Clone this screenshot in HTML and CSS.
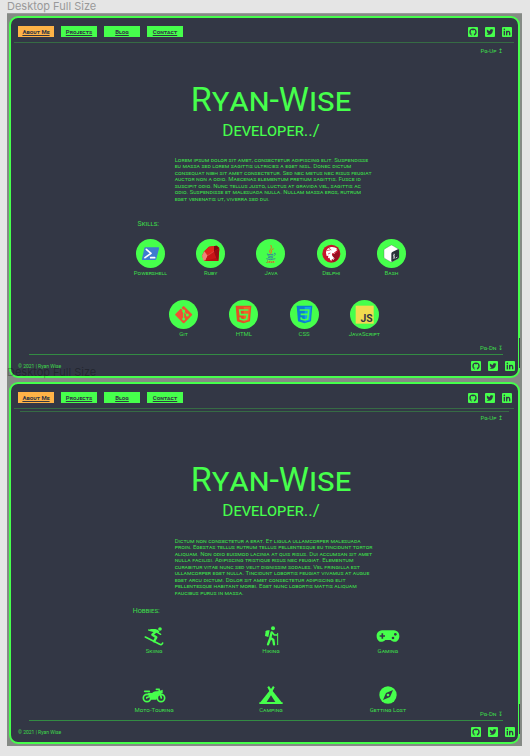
FILE: index.html
```html
<!DOCTYPE html>
<html lang="en">
<head>
<meta charset="utf-8">
<meta name="viewport" content="width=device-width, initial-scale=1">
<title>Ryan-Wise | Developer</title>
<link rel="stylesheet" href="styles.css">
</head>
<body>
<svg class="sprite" aria-hidden="true">
  <symbol id="github" viewBox="0 0 30 30"><rect width="30" height="30" rx="3" fill="#46ff4c"/><path transform="translate(1.8 2) scale(1.1)" fill="#333745" d="M12,2A10,10 0 0,0 2,12C2,16.42 4.87,20.17 8.84,21.5C9.34,21.58 9.5,21.27 9.5,21C9.5,20.77 9.5,20.14 9.5,19.31C6.73,19.91 6.14,17.97 6.14,17.97C5.68,16.81 5.03,16.5 5.03,16.5C4.12,15.88 5.1,15.9 5.1,15.9C6.1,15.97 6.63,16.93 6.63,16.93C7.5,18.45 8.97,18 9.54,17.76C9.63,17.11 9.89,16.67 10.17,16.42C7.95,16.17 5.62,15.31 5.62,11.5C5.62,10.39 6,9.5 6.65,8.79C6.55,8.54 6.2,7.5 6.75,6.15C6.75,6.15 7.59,5.88 9.5,7.17C10.29,6.95 11.15,6.84 12,6.84C12.85,6.84 13.71,6.95 14.5,7.17C16.41,5.88 17.25,6.15 17.25,6.15C17.8,7.5 17.45,8.54 17.35,8.79C18,9.5 18.38,10.39 18.38,11.5C18.38,15.32 16.04,16.16 13.81,16.41C14.17,16.72 14.5,17.33 14.5,18.26C14.5,19.6 14.5,20.68 14.5,21C14.5,21.27 14.66,21.59 15.17,21.5C19.14,20.16 22,16.42 22,12A10,10 0 0,0 12,2Z"/></symbol>
  <symbol id="twitter" viewBox="0 0 30 30"><rect width="30" height="30" rx="3" fill="#46ff4c"/><path transform="translate(3 2.5)" fill="#333745" d="M22.46,6C21.69,6.35 20.86,6.58 20,6.69C20.88,6.16 21.56,5.32 21.88,4.31C21.05,4.81 20.13,5.16 19.16,5.36C18.37,4.5 17.26,4 16,4C13.65,4 11.73,5.92 11.73,8.29C11.73,8.63 11.77,8.96 11.84,9.27C8.28,9.09 5.11,7.38 3,4.79C2.63,5.42 2.42,6.16 2.42,6.94C2.42,8.43 3.17,9.75 4.33,10.5C3.62,10.5 2.96,10.3 2.38,10C2.38,12.11 3.86,13.85 5.82,14.24C5.46,14.34 5.08,14.39 4.69,14.39C4.42,14.39 4.15,14.36 3.89,14.31C4.43,16 6,17.26 7.89,17.29C6.43,18.45 4.58,19.13 2.56,19.13C2.22,19.13 1.88,19.11 1.54,19.07C3.44,20.29 5.7,21 8.12,21C16,21 20.33,14.46 20.33,8.79C20.33,8.6 20.33,8.42 20.32,8.23C21.16,7.63 21.88,6.87 22.46,6Z"/></symbol>
  <symbol id="linkedin" viewBox="0 0 30 30"><rect width="30" height="30" rx="3" fill="#46ff4c"/><g fill="#333745"><circle cx="7" cy="7" r="2.4"/><rect x="5" y="11.5" width="4" height="13.5"/><rect x="12" y="11.5" width="4" height="13.5"/></g><path d="M14 17.5C14 12 23 11.500 23 18V25" fill="none" stroke="#333745" stroke-width="4"/></symbol>

  <symbol id="powershell" viewBox="0 0 87 87"><path d="M28 25H67Q70 25 69 29L61 59Q60 63 56 63H21Q17 63 18 59L25 28Q26 25 28 25Z" fill="#3f7bd0"/><path d="M31 31 45 43 27 56M44 56H56" fill="none" stroke="#fff" stroke-width="5" stroke-linecap="round" stroke-linejoin="round"/></symbol>
  <symbol id="ruby" viewBox="0 0 87 87"><path d="M18 50 25 37 39 23 62 20 70 27 67 66 25 66Z" fill="#b80f12"/><path d="M18 50 25 37 35 50 28 65 22 64Z" fill="#ef8478"/><path d="M25 37 39 23 54 21 54 37 35 50Z" fill="#e0251c"/><path d="M54 21 62 20 70 27 54 37Z" fill="#7f0910"/><path d="M35 50 54 37 61 57 28 65Z" fill="#c81517"/><path d="M54 37 70 30 67 66 61 57Z" fill="#980b12"/><path d="M25 37 35 50 54 37" fill="none" stroke="#ff9c8d" stroke-width="1"/></symbol>
  <symbol id="delphi" viewBox="0 0 87 87"><circle cx="43" cy="44" r="27" fill="#c7142c"/><path d="M60 25A27 27 0 0 1 48 70L41 50 64 38Z" fill="#981021"/><path d="M27 42C27 24 49 18 62 31L57 32 61 36 54 36 58 40 51 39 54 44 47 42Q42 46 48 53L54 59 49 58 51 64 45 60 43 66Q37 62 38 56L33 58 34 50 29 51Z" fill="#fff"/><path d="M29 35 40 33M35 27 43 33M33 45 40 42" stroke="#c7142c" stroke-width="2"/></symbol>
  <symbol id="bash" viewBox="0 0 87 87"><path d="M43 18Q45 18 64 30Q66 31 66 35V54Q66 57 63 59L46 68Q43 70 40 68L24 59Q21 57 21 54V34Q21 31 24 29Z" fill="#fff" stroke="#50575b" stroke-width="1"/><path d="M43 44Q43 41 46 39L64 30Q66 31 66 35V54Q66 57 63 59L46 68Q44 69 43 67Z" fill="#293138"/><path d="M53 46Q48 48 51 52 54 55 49 58M51 44V60M56 57 61 54" fill="none" stroke="#fff" stroke-width="2"/></symbol>
  <symbol id="git" viewBox="0 0 87 87"><rect x="25" y="25" width="38" height="38" rx="3" transform="rotate(45 44 44)" fill="#f05033"/><path d="M34 22 44 32V57M44 34 54 45" fill="none" stroke="#46ff4c" stroke-width="3"/><g fill="#46ff4c"><circle cx="44" cy="33" r="4.500"/><circle cx="44" cy="57" r="4.500"/><circle cx="55" cy="45" r="4.500"/></g></symbol>
  <symbol id="html" viewBox="0 0 87 87"><path d="M20 17H67L63 64 43.500 70 24 64Z" fill="#e44f26"/><path d="M44 21H63L60 61 44 66Z" fill="#f16529"/><path d="M58 30H32L34 44H55L53 57 43.500 60 34 57 33 52" fill="none" stroke="#46ff4c" stroke-width="5"/></symbol>
  <symbol id="css" viewBox="0 0 87 87"><path d="M20 17H67L63 64 43.500 70 24 64Z" fill="#0b7fd0"/><path d="M44 21H63L60 61 44 66Z" fill="#13a0e8"/><path d="M29 30H56L55 43H32M55 43 53 57 43.500 60 34 57 33 52" fill="none" stroke="#46ff4c" stroke-width="5"/></symbol>

  <symbol id="skiing" viewBox="0 0 66 60"><g fill="none" stroke="#46ff4c" stroke-linecap="round" stroke-linejoin="round"><path d="M7 33 50 55Q56 58 59 51" stroke-width="5"/><path d="M17 12 43 19 53 25" stroke-width="4"/><path d="M42 14 28 26 40 34 33 46" stroke-width="7"/><path d="M24 12 36 12 46 17" stroke-width="6"/></g><circle cx="51" cy="9" r="5.500" fill="#46ff4c"/></symbol>
  <symbol id="hiking" viewBox="0 0 66 60"><g fill="none" stroke="#46ff4c" stroke-linecap="round" stroke-linejoin="round"><path d="M35 19 31 35 40 42 42 55M30 39 24 55" stroke-width="7"/><path d="M37 20 43 27H51" stroke-width="5"/><path d="M53 22V56" stroke-width="3"/></g><path d="M17 16Q19 11 29 13L25 33 15 30Z" fill="#46ff4c"/><circle cx="39" cy="7" r="6" fill="#46ff4c"/></symbol>
  <symbol id="gaming" viewBox="0 0 72 60"><path d="M18 13H54C78 15 73 51 53 47Q47 46 44 42H28Q25 46 19 47C-1 51-6 15 18 13Z" fill="#46ff4c"/><path d="M19 22V38M11 30H27" stroke="#333745" stroke-width="5"/><circle cx="58" cy="25" r="4" fill="#333745"/><circle cx="51" cy="36" r="4" fill="#333745"/></symbol>
  <symbol id="motorcycle" viewBox="0 0 72 60"><g fill="none" stroke="#46ff4c"><circle cx="15" cy="39" r="11" stroke-width="5"/><circle cx="57" cy="39" r="11" stroke-width="5"/><path d="M43 13H51L58 39" stroke-width="5" stroke-linecap="round"/><path d="M8 19H22" stroke-width="5" stroke-linecap="round"/></g><path d="M20 23 30 24Q36 18 43 19L52 18 62 14V24L51 28 43 44H25L23 37 12 42 12 36 24 32 16 27Z" fill="#46ff4c"/></symbol>
  <symbol id="camping" viewBox="0 0 72 60"><path d="M30 3 36 12 42 3 47 7 41 18 68 52H71V57H1V52H4L31 18 25 7ZM36 31 23 51H49Z" fill="#46ff4c" fill-rule="evenodd"/></symbol>
  <symbol id="compass" viewBox="0 0 60 60"><circle cx="30" cy="30" r="26" fill="#46ff4c"/><path d="M45 15 36 36 15 45 24 24Z" fill="#333745"/><circle cx="30" cy="30" r="4" fill="#46ff4c"/></symbol>
</svg>

<p class="frame-label">Desktop Full Size</p>
<div class="canvas">
  <section class="screen">
    <header class="topbar">
      <nav class="menu">
        <a class="menu-link current" href="#about">About Me</a>
        <a class="menu-link" href="#projects">Projects</a>
        <a class="menu-link" href="#blog">Blog</a>
        <a class="menu-link" href="#contact">Contact</a>
      </nav>
      <div class="social">
        <a href="#github" aria-label="GitHub"><svg><use href="#github"/></svg></a>
        <a href="#twitter" aria-label="Twitter"><svg><use href="#twitter"/></svg></a>
        <a href="#linkedin" aria-label="LinkedIn"><svg><use href="#linkedin"/></svg></a>
      </div>
    </header>
    <div class="page-up"><a href="#up">Pg-Up ↥</a></div>
    <main class="content">
      <h1>Ryan-Wise</h1>
      <p class="role">Developer../</p>
      <p class="bio">Lorem ipsum dolor sit amet, consectetur adipiscing elit. Suspendisse<br>eu massa sed lorem sagittis ultricies a eget nisl. Donec dictum<br>consequat nibh sit amet consectetur. Sed nec metus nec risus feugiat<br>auctor non a odio. Maecenas elementum pretium sagittis. Fusce id<br>suscipit odio. Nunc tellus justo, luctus at gravida vel, sagittis ac<br>odio. Suspendisse et malesuada nulla. Nullam massa eros, rutrum<br>eget venenatis ut, viverra sed dui.</p>
      <h2 class="skills-title">Skills:</h2>
      <ul class="skills">
        <li><svg><use href="#powershell"/></svg>Powershell</li>
        <li><svg><use href="#ruby"/></svg>Ruby</li>
        <li><svg viewBox="0 0 87 87"><path d="M45 19Q50 27 42 33 38 38 44 44M52 29Q42 33 46 40" fill="none" stroke="#ef6b20" stroke-width="3" stroke-linecap="round"/><path d="M34 44Q30 48 52 46M35 50Q41 54 52 51M36 55Q43 58 51 56M31 59Q42 65 58 59M54 43Q62 42 55 50" fill="none" stroke="#3a8699" stroke-width="3"/><text class="java-name" x="43.500" y="71" text-anchor="middle">Java</text></svg>Java</li>
        <li><svg><use href="#delphi"/></svg>Delphi</li>
        <li><svg><use href="#bash"/></svg>Bash</li>
        <li class="row-start"><svg><use href="#git"/></svg>Git</li>
        <li><svg><use href="#html"/></svg>HTML</li>
        <li><svg><use href="#css"/></svg>CSS</li>
        <li><svg viewBox="0 0 87 87"><rect x="17" y="17" width="54" height="54" fill="#f0db4f"/><text class="js-name" x="68" y="67" text-anchor="end">JS</text></svg>JavaScript</li>
      </ul>
    </main>
    <div class="page-down"><a href="#down">Pg-Dn ↧</a></div>
    <footer class="bottombar">
      <small>© 2021 | Ryan Wise</small>
      <div class="social">
        <a href="#github" aria-label="GitHub"><svg><use href="#github"/></svg></a>
        <a href="#twitter" aria-label="Twitter"><svg><use href="#twitter"/></svg></a>
        <a href="#linkedin" aria-label="LinkedIn"><svg><use href="#linkedin"/></svg></a>
      </div>
    </footer>
  </section>

  <div class="label-anchor"><p class="frame-label shaded">Desktop Full Size</p></div>

  <section class="screen hobbies-screen">
    <header class="topbar">
      <nav class="menu">
        <a class="menu-link current" href="#about">About Me</a>
        <a class="menu-link" href="#projects">Projects</a>
        <a class="menu-link" href="#blog">Blog</a>
        <a class="menu-link" href="#contact">Contact</a>
      </nav>
      <div class="social">
        <a href="#github" aria-label="GitHub"><svg><use href="#github"/></svg></a>
        <a href="#twitter" aria-label="Twitter"><svg><use href="#twitter"/></svg></a>
        <a href="#linkedin" aria-label="LinkedIn"><svg><use href="#linkedin"/></svg></a>
      </div>
    </header>
    <div class="page-up ruled"><a href="#up">Pg-Up ↥</a></div>
    <main class="content">
      <h1>Ryan-Wise</h1>
      <p class="role">Developer../</p>
      <p class="bio">Dictum non consectetur a erat. Et ligula ullamcorper malesuada<br>proin. Egestas tellus rutrum tellus pellentesque eu tincidunt tortor<br>aliquam. Non odio euismod lacinia at quis risus. Dui accumsan sit amet<br>nulla facilisi. Adipiscing tristique risus nec feugiat. Elementum<br>curabitur vitae nunc sed velit dignissim sodales. Vel fringilla est<br>ullamcorper eget nulla. Tincidunt lobortis feugiat vivamus at augue<br>eget arcu dictum. Dolor sit amet consectetur adipiscing elit<br>pellentesque habitant morbi. Eget nunc lobortis mattis aliquam<br>faucibus purus in massa.</p>
      <h2 class="hobbies-title">Hobbies:</h2>
      <ul class="hobbies">
        <li><svg><use href="#skiing"/></svg>Skiing</li>
        <li><svg><use href="#hiking"/></svg>Hiking</li>
        <li><svg><use href="#gaming"/></svg>Gaming</li>
        <li><svg><use href="#motorcycle"/></svg>Moto-Touring</li>
        <li><svg><use href="#camping"/></svg>Camping</li>
        <li><svg><use href="#compass"/></svg>Getting Lost</li>
      </ul>
    </main>
    <div class="page-down"><a href="#down">Pg-Dn ↧</a></div>
    <footer class="bottombar">
      <small>© 2021 | Ryan Wise</small>
      <div class="social">
        <a href="#github" aria-label="GitHub"><svg><use href="#github"/></svg></a>
        <a href="#twitter" aria-label="Twitter"><svg><use href="#twitter"/></svg></a>
        <a href="#linkedin" aria-label="LinkedIn"><svg><use href="#linkedin"/></svg></a>
      </div>
    </footer>
  </section>
</div>
</body>
</html>
```
FILE: styles.css
```css
:root {
  --green: #46ff4c;
  --green-dim: #3ddc4a;
  --rule: #366b44;
  --slate: #333745;
}

* { box-sizing: border-box; }

body {
  margin: 0;
  padding: 0 8px 8px 7px;
  background: #e5e5e5;
  color: var(--green-dim);
  font-family: Roboto, "Liberation Sans", sans-serif;
  font-size: 6px;
  line-height: 8px;
}

h1, h2, p, ul { margin: 0; padding: 0; font-weight: 400; }
ul { list-style: none; }
a { color: inherit; }

.sprite { position: absolute; width: 0; height: 0; }
.java-name { font: 700 12px Roboto, sans-serif; fill: #d65c2b; }
.js-name { font: 700 31px Roboto, sans-serif; fill: #333745; }

.frame-label {
  height: 13px;
  color: #999;
  font: 11px/12px Inter, sans-serif;
}

.label-anchor { position: relative; height: 4px; }
.shaded {
  position: absolute;
  left: -2px;
  bottom: 3px;
  color: rgba(0, 0, 0, 0.3);
}

.canvas {
  padding: 2px;
  background: #858a85;
  border-top: 1px solid #9a9c9a;
}

.screen {
  position: relative;
  display: flex;
  flex-direction: column;
  min-height: 362px;
  background: var(--slate);
  border: 2px solid var(--green);
  border-radius: 9px;
  font-variant-caps: small-caps;
}

.screen::after {
  content: "";
  position: absolute;
  right: -2px;
  bottom: 8px;
  width: 1px;
  height: 30px;
  background: var(--slate);
}

.topbar {
  display: flex;
  justify-content: space-between;
  align-items: center;
  margin: 0 4px 0 3px;
  padding: 8px 2px 5px 4px;
  border-bottom: 1px solid var(--rule);
}

.menu { display: flex; gap: 7px; }

.menu-link {
  width: 36px;
  background: var(--green);
  color: var(--slate);
  font-weight: 700;
  line-height: 11px;
  text-align: center;
}

.current { background: #ffb347; }

.social { display: flex; gap: 7px; }
.social svg { display: block; width: 10px; height: 10px; }

.page-up, .page-down { text-align: right; }
.page-up { height: 14px; padding: 4px 15px 0 0; }
.page-up a, .page-down a { text-decoration: none; }
.page-up.ruled {
  margin: 2px 9px 0;
  padding: 2px 6px 0 0;
  height: 12px;
  border-top: 1px solid var(--rule);
}

.content { flex: 1; padding-left: 13px; }

h1 {
  padding-top: 21px;
  color: var(--green);
  font-size: 34px;
  line-height: 42px;
  text-align: center;
}

.hobbies-screen h1 { padding-top: 35px; }

.role {
  color: var(--green);
  font-size: 17px;
  line-height: 20px;
  text-align: center;
}

.bio {
  width: 39%;
  margin: 17px auto 0;
  line-height: 1.08;
  white-space: nowrap;
}

.hobbies-screen .bio { margin-top: 18px; }

h2 { font-size: 7px; line-height: 8px; }
.skills-title { margin: 18px 0 0 23%; }
.hobbies-title { margin: 11px 0 0 22%; }

.skills {
  display: flex;
  flex-wrap: wrap;
  justify-content: center;
  width: 61%;
  margin: 11px auto 0;
  row-gap: 23px;
}

.skills li { width: 20%; text-align: center; }
.skills .row-start { margin-left: 6px; }

.skills svg {
  display: block;
  width: 29px;
  height: 29px;
  margin: 0 auto 1px;
  border-radius: 50%;
  background: var(--green);
}

.hobbies {
  display: grid;
  grid-template-columns: repeat(3, 1fr);
  row-gap: 31px;
  width: 71%;
  margin: 11px auto -2px;
  line-height: 6px;
}

.hobbies li { text-align: center; }
.hobbies svg {
  display: block;
  width: 24px;
  height: 20px;
  margin: 0 auto 2px;
}

.page-down {
  margin: 0 15px 0 18px;
  padding-bottom: 3px;
  line-height: 6px;
  border-bottom: 1px solid #338b43;
}

.bottombar {
  display: flex;
  justify-content: space-between;
  align-items: center;
  padding: 6px 3px 5px 7px;
}

.bottombar small {
  font-size: 5px;
  font-variant-caps: normal;
}
```
